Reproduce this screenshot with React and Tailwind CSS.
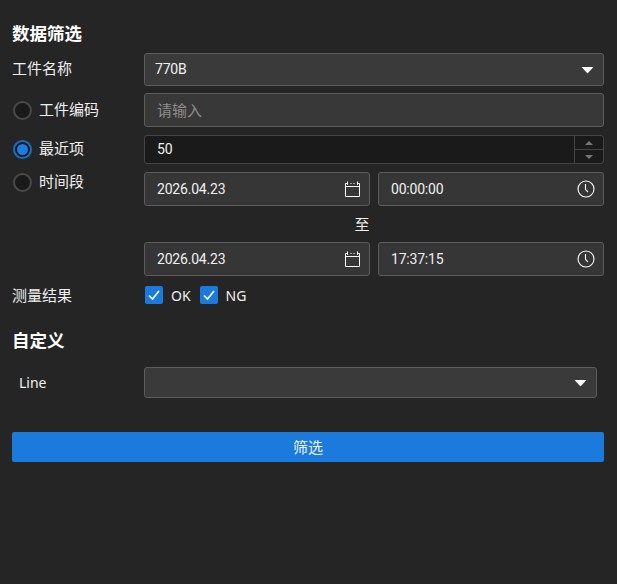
const font = '"Noto Sans", "Noto Sans CJK SC", sans-serif';

function Caret() {
  return (
    <svg width="13" height="8" viewBox="0 0 13 8" className="block">
      <path d="M0.5 1 H12.5 L6.5 7.5 Z" fill="#fff" />
    </svg>
  );
}

function Calendar() {
  return (
    <svg width="16" height="16" viewBox="0 0 16 16" fill="none" stroke="#fff" strokeWidth="1" className="mr-[1px] block">
      <path d="M3.5 2.5 H1.5 V15.5 H15.5 V2.5 H13.5" />
      <path d="M1.5 5.5 H15.5" />
      <path d="M3.5 0.5 V4 M13.5 0.5 V4 M6.5 2.5 H7.5 M9.5 2.5 H10.5" />
    </svg>
  );
}

function Clock() {
  return (
    <svg width="18" height="18" viewBox="0 0 18 18" fill="none" stroke="#fff" strokeWidth="1.1" className="block">
      <circle cx="9" cy="9" r="8" />
      <path d="M8.5 4 V9.5 L11 12" />
    </svg>
  );
}

function Radio({ checked }) {
  return (
    <span
      className={`flex h-[19px] w-[19px] shrink-0 items-center justify-center rounded-full border-2 bg-[#1a1a1a] ${
        checked ? 'border-[#1a6fc0]' : 'border-[#484848]'
      }`}
    >
      {checked && <span className="h-[11px] w-[11px] rounded-full bg-[#1a7ee0]" />}
    </span>
  );
}

function Check({ label }) {
  return (
    <span className="flex items-center">
      <span className="flex h-[18px] w-[18px] items-center justify-center rounded-[2px] bg-[#1a7bdc]">
        <svg width="14" height="12" viewBox="0 0 14 12" fill="none" stroke="#fff" strokeWidth="1.6">
          <path d="M2 6.5 L5.5 10 L12 2" />
        </svg>
      </span>
      <span className="ml-2 text-[14px] text-[#f0f0f0]">{label}</span>
    </span>
  );
}

function Value({ children }) {
  return <span className="font-['Roboto'] text-[14px] tracking-[-0.2px] text-[#f0f0f0]">{children}</span>;
}

function Field({ children, icon }) {
  return (
    <div className="flex h-[34px] items-center justify-between rounded-[3px] border border-[#5c5c5c] bg-[#363636] pl-3 pr-2">
      <Value>{children}</Value>
      {icon}
    </div>
  );
}

function Row({ label, children, className = '' }) {
  return (
    <div className={`flex ${className}`}>
      <div className="w-[132px] shrink-0">{label}</div>
      <div className="min-w-0 flex-1">{children}</div>
    </div>
  );
}

function RadioLabel({ text, checked }) {
  return (
    <div className="flex items-center pl-[1px] text-[15px] text-[#f0f0f0]">
      <Radio checked={checked} />
      <span className="ml-[7px] -translate-y-[1px]">{text}</span>
    </div>
  );
}

export default function App() {
  return (
    <div className="h-[584px] w-[617px] overflow-hidden bg-[#252525] pl-3 pr-[13px] pt-[22px]" style={{ fontFamily: font }}>
      <h2 className="h-[23px] text-[17.5px] font-bold leading-[23px] text-white">数据筛选</h2>

      <Row
        className="mt-[8px]"
        label={<div className="flex h-[33px] -translate-y-[1px] items-center text-[15px] text-[#f0f0f0]">工件名称</div>}
      >
        <div className="flex h-[33px] items-center justify-between rounded-[3px] border border-[#5c5c5c] bg-[#3a3a3a] pl-[10px] pr-[9px]">
          <Value>770B</Value>
          <Caret />
        </div>
      </Row>

      <Row
        className="mt-[7px]"
        label={<div className="flex h-[34px] items-center"><RadioLabel text="工件编码" /></div>}
      >
        <div className="flex h-[34px] items-center rounded-[3px] border border-[#5c5c5c] bg-[#383838] pl-3 text-[15px] text-[#8c8c8c]">
          请输入
        </div>
      </Row>

      <Row
        className="mt-[8px]"
        label={<div className="flex h-[29px] items-center"><RadioLabel text="最近项" checked /></div>}
      >
        <div className="flex h-[29px] overflow-hidden rounded-[3px] border border-[#454545] bg-[#1a1a1a]">
          <div className="flex flex-1 items-center pl-3"><Value>50</Value></div>
          <div className="flex w-[29px] flex-col border-l border-[#454545]">
            <div className="flex flex-1 items-center justify-center border-b border-[#454545]">
              <span className="h-0 w-0 border-x-[4px] border-b-[4px] border-x-transparent border-b-[#777]" />
            </div>
            <div className="flex flex-1 items-center justify-center">
              <span className="h-0 w-0 border-x-[4px] border-t-[4px] border-x-transparent border-t-[#777]" />
            </div>
          </div>
        </div>
      </Row>

      <Row
        className="mt-[8px]"
        label={<div className="flex h-[20px] items-center"><RadioLabel text="时间段" /></div>}
      >
        <div className="grid grid-cols-[226px_226px] gap-x-2">
          <Field icon={<Calendar />}>2026.04.23</Field>
          <Field icon={<Clock />}>00:00:00</Field>
        </div>
        <div className="flex h-[36px] items-center justify-center pr-[24px] text-[15px] text-[#f0f0f0]">至</div>
        <div className="grid grid-cols-[226px_226px] gap-x-2">
          <Field icon={<Calendar />}>2026.04.23</Field>
          <Field icon={<Clock />}>17:37:15</Field>
        </div>
      </Row>

      <Row
        className="mt-[10px]"
        label={<div className="flex h-[18px] items-center text-[15px] text-[#f0f0f0]">测量结果</div>}
      >
        <div className="flex h-[18px] items-center gap-[9px] pl-[1px]">
          <Check label="OK" />
          <Check label="NG" />
        </div>
      </Row>

      <h2 className="mt-[25px] h-[23px] text-[17.5px] font-bold leading-[23px] text-white">自定义</h2>

      <Row
        className="mt-[15px] pr-[7px]"
        label={<div className="flex h-[31px] items-center pl-[7px] text-[14px] text-[#f0f0f0]">Line</div>}
      >
        <div className="flex h-[31px] items-center justify-end rounded-[3px] border border-[#5c5c5c] bg-[#3a3a3a] pr-[9px]">
          <Caret />
        </div>
      </Row>

      <button className="mt-[34px] block h-[30px] w-full rounded-[2px] bg-[#1a7bdc] text-[15px] text-[#f0f0f0]">筛选</button>
    </div>
  );
}
